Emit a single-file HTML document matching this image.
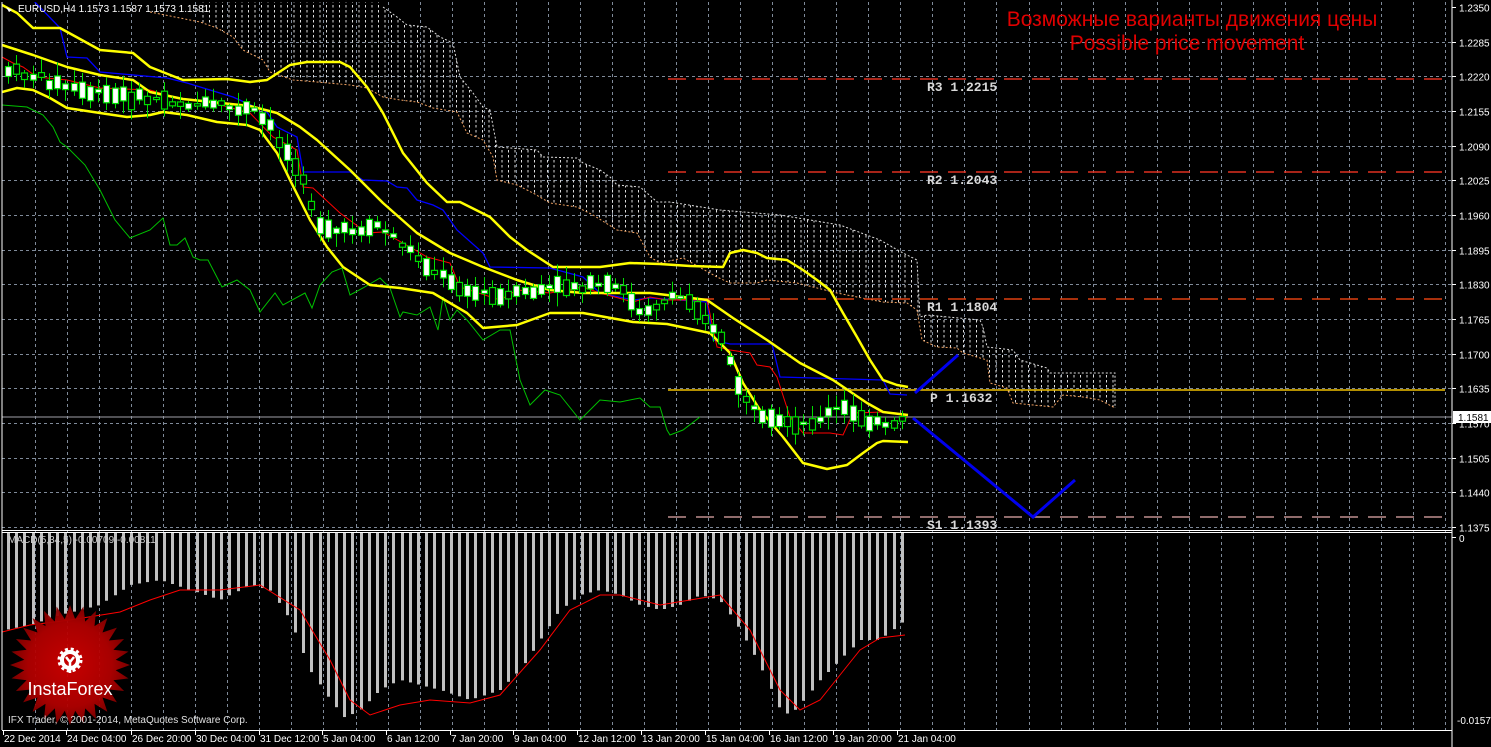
<!DOCTYPE html>
<html><head><meta charset="utf-8"><style>
html,body{margin:0;padding:0;background:#000;width:1491px;height:747px;overflow:hidden}
svg{display:block}
</style></head><body>
<svg id="s" width="1491" height="747" viewBox="0 0 1491 747" xmlns="http://www.w3.org/2000/svg" font-family="Liberation Sans, sans-serif">
<defs>
<pattern id="hatch" width="6.5" height="5" patternUnits="userSpaceOnUse">
<line x1="1.5" y1="0" x2="1.5" y2="2.5" stroke="#ddd" stroke-width="1"/>
</pattern>
<clipPath id="mainclip"><rect x="2" y="2" width="1450" height="528"/></clipPath>
<clipPath id="subclip"><rect x="2" y="533" width="1450" height="197"/></clipPath>
<radialGradient id="lg"><stop offset="0" stop-color="#d00000"/><stop offset="0.7" stop-color="#b00000"/><stop offset="1" stop-color="#800000"/></radialGradient>
</defs>
<g id="grid" stroke="#7f8a99" stroke-dasharray="3,3" stroke-width="1"></g>
<g clip-path="url(#mainclip)">
<polygon fill="url(#hatch)" points="200,0 383,0 383,7 397,17 407,25 427,27 440,37 453,43 460,77 473,93 483,107 490,110 497,147 537,150 543,157 577,158 583,163 600,170 610,177 617,185 640,187 647,193 657,202 670,202 720,210 780,215 840,225 880,240 903,253 917,260 920,317 927,315 980,320 983,327 987,347 1013,350 1020,360 1047,368 1050,373 1115,373 1115,408 1100,400 1083,397 1063,395 1053,407 1013,403 1007,388 990,383 987,360 963,353 957,348 937,347 922,340 917,310 907,303 883,302 857,297 837,293 797,283 767,280 757,283 730,283 717,277 683,258 660,263 650,257 637,233 617,230 593,215 577,207 550,203 533,193 517,185 497,180 493,157 483,140 467,133 457,112 433,108 417,102 400,100 383,97 367,88 350,85 317,82 293,80 270,72 263,60 243,50 233,37 217,28 200,22"/>
<polyline fill="none" stroke="#f0a060" stroke-dasharray="2,2" points="150,12 200,22 217,28 233,37 243,50 263,60 270,72 293,80 317,82 350,85 367,88 383,97 400,100 417,102 433,108 457,112 467,133 483,140 493,157 497,180 517,185 533,193 550,203 577,207 593,215 617,230 637,233 650,257 660,263 683,258 717,277 730,283 757,283 767,280 797,283 837,293 857,297 883,302 907,303 917,310 922,340 937,347 957,348 963,353 987,360 990,383 1007,388 1013,403 1053,407 1063,395 1083,397 1100,400 1115,408"/>
<polyline fill="none" stroke="#ddd" stroke-dasharray="2,2" points="383,7 397,17 407,25 427,27 440,37 453,43 460,77 473,93 483,107 490,110 497,147 537,150 543,157 577,158 583,163 600,170 610,177 617,185 640,187 647,193 657,202 670,202 720,210 780,215 840,225 880,240 903,253 917,260 920,317 927,315 980,320 983,327 987,347 1013,350 1020,360 1047,368 1050,373 1115,373 1115,408"/>
<line x1="668" y1="79" x2="1445" y2="79" stroke="#e03020" stroke-width="1.5" stroke-dasharray="18,10"/>
<line x1="668" y1="172" x2="1445" y2="172" stroke="#e03020" stroke-width="1.5" stroke-dasharray="18,10"/>
<line x1="668" y1="299" x2="1445" y2="299" stroke="#e04010" stroke-width="1.5" stroke-dasharray="18,10"/>
<line x1="668" y1="390" x2="1445" y2="390" stroke="#f0c000" stroke-width="1.5"/>
<line x1="668" y1="517" x2="1445" y2="517" stroke="#c09090" stroke-width="1.5" stroke-dasharray="18,10"/>
<line x1="2" y1="417" x2="1452" y2="417" stroke="#a0a0a8" stroke-width="1"/>
<polyline fill="none" stroke="#00c000" stroke-width="1" points="2,105 27,107 43,115 53,127 60,142 67,147 85,165 100,190 115,220 130,238 150,230 163,218 170,245 177,245 185,238 193,257 200,260 208,260 222,287 237,280 250,290 260,312 275,293 283,305 305,293 312,308 320,285 332,272 342,268 350,295 363,288 380,278 390,288 400,317 403,312 417,315 430,307 438,330 443,297 450,320 457,310 467,320 483,340 500,330 510,330 520,380 530,405 545,390 560,395 580,420 600,400 620,402 640,398 650,407 660,407 667,430 670,435 683,430 700,417"/>
<polyline fill="none" stroke="#0000ff" stroke-width="1.3" points="33,0 60,28 67,57 87,58 100,72 167,78 187,83 233,97 253,106 267,112 277,127 297,137 303,172 350,172 363,180 387,181 397,187 407,188 417,200 433,205 443,210 457,230 483,253 490,267 550,268 583,277 600,293 633,300 650,298 707,302 713,340 730,344 772,344 780,377 883,380 890,394 907,395"/>
<polyline fill="none" stroke="#ff0000" stroke-width="1" points="2,57 13,63 23,67 37,77 67,80 100,88 150,90 177,98 217,104 250,113 273,137 297,150 303,187 313,188 340,213 367,233 383,232 410,247 427,257 450,263 460,287 500,300 517,290 550,293 583,287 600,293 633,302 650,297 667,300 707,300 717,347 730,350 750,353 757,365 770,367 777,377 790,417 803,433 830,433 843,435 853,413 883,412 897,413 907,418"/>
<g fill="none" stroke="#ffff00" stroke-width="2.5" stroke-linejoin="round">
<polyline points="2,5 17,13 33,28 60,28 100,50 133,53 150,67 183,80 227,79 250,82 267,80 290,65 307,62 340,62 350,67 367,87 383,113 403,153 427,183 447,202 460,202 490,217 510,237 527,250 553,267 600,267 630,263 660,264 690,266 723,267 730,253 743,250 757,253 767,258 787,260 803,270 817,280 830,290 843,313 857,337 870,360 883,380 897,385 908,387"/>
<polyline points="2,45 33,55 67,67 100,75 133,80 150,92 183,99 250,106 277,113 300,127 317,140 350,170 383,203 417,233 450,253 483,267 517,280 550,290 583,293 650,293 667,295 707,300 733,318 767,340 800,363 833,380 867,403 883,412 908,415"/>
<polyline points="2,92 17,88 33,90 50,98 67,108 100,113 127,117 150,115 163,112 187,115 217,122 247,125 260,130 277,153 290,180 310,220 327,247 343,267 370,285 400,288 433,293 467,313 483,328 517,325 550,313 583,313 633,322 650,323 667,324 710,333 730,353 743,383 760,410 783,437 803,463 827,469 847,465 863,453 877,443 883,441 908,442"/>
</g>
<g id="candles"></g>
<g fill="none" stroke="#0000ee" stroke-width="3">
<polyline points="915,393 958,355"/>
<polyline points="913,418 1033,517 1075,480"/>
</g>
<g style="font-family:'Liberation Mono',monospace;font-weight:bold" font-size="13" fill="#d8d8d8">
<text x="927" y="91">R3 1.2215</text>
<text x="927" y="184">R2 1.2043</text>
<text x="927" y="311">R1 1.1804</text>
<text x="930" y="402">P 1.1632</text>
<text x="927" y="529">S1 1.1393</text>
</g>
</g>
<text x="1192" y="26" font-size="21" fill="#e00000" text-anchor="middle">Возможные варианты движения цены</text>
<text x="1187" y="50" font-size="21" fill="#e00000" text-anchor="middle">Possible price movement</text>
<g clip-path="url(#subclip)">
<g id="macd" fill="#c0c0c0"></g>
<polyline fill="none" stroke="#ff0000" stroke-width="1" points="2,632 30,625 70,620 120,612 150,600 180,590 220,590 260,585 300,610 330,660 350,700 370,715 400,705 430,700 470,703 500,695 540,650 570,610 600,595 620,595 660,605 690,600 720,595 750,630 780,690 800,710 820,700 840,675 860,650 880,638 905,635"/>
</g>
<g transform="translate(70,665)">
<polygon id="star" fill="url(#lg)" opacity="0.95"/>
<g fill="none" stroke="#fff">
<circle cx="0" cy="-5" r="8" stroke-width="4"/>
<circle cx="0" cy="-5" r="11" stroke-width="3" stroke-dasharray="3,2.8"/>
</g>
<path d="M-4,-8 L0,-3 L4,-8 M0,-3 L0,8" stroke="#fff" stroke-width="2.5" fill="none"/>
<text x="0" y="30" font-size="18" fill="#fff" text-anchor="middle">InstaForex</text>
</g>
<text x="8" y="723" font-size="10" fill="#e0e0e0">IFX Trader, © 2001-2014, MetaQuotes Software Corp.</text>
<text x="18" y="12" font-size="10" fill="#fff">EURUSD,H4  1.1573 1.1587 1.1573 1.1581</text>
<polygon points="6,7 12,10 9,12" fill="#fff"/>
<text x="8" y="543" font-size="10" fill="#d0d0d0">MACD(5,34,5) -0.00709 -0.00811</text>
<line x1="2" y1="2" x2="2" y2="730" stroke="#fff"/>
<line x1="1452" y1="0" x2="1452" y2="747" stroke="#fff"/>
<line x1="2" y1="530.5" x2="1452" y2="530.5" stroke="#fff"/>
<line x1="2" y1="532.5" x2="1452" y2="532.5" stroke="#fff"/>
<line x1="2" y1="730.5" x2="1452" y2="730.5" stroke="#fff"/>
<g id="axis" font-size="10" fill="#fff"></g>
<rect x="1453" y="411" width="38" height="12" fill="#fff"/>
<text x="1458" y="421" font-size="10" fill="#000">1.1581</text>
</svg>
<script>
(function(){
var NS="http://www.w3.org/2000/svg";
function el(t,a,p){var e=document.createElementNS(NS,t);for(var k in a)e.setAttribute(k,a[k]);p.appendChild(e);return e;}
var grid=document.getElementById('grid'),axis=document.getElementById('axis');
var prices=["1.2350","1.2285","1.2220","1.2155","1.2090","1.2025","1.1960","1.1895","1.1830","1.1765","1.1700","1.1635","1.1570","1.1505","1.1440","1.1375"];
for(var i=0;i<prices.length;i++){var y=Math.round(7+i*34.67)+0.5;
 if(i>0)el('line',{x1:2,y1:y,x2:1452,y2:y},grid);
 el('line',{x1:1452,y1:y,x2:1456,y2:y,stroke:'#fff'},axis);
 var t=el('text',{x:1459,y:y+4},axis);t.textContent=prices[i];}
for(var x=35;x<1452;x+=32.05){var xx=Math.round(x)+0.5;el('line',{x1:xx,y1:2,x2:xx,y2:730},grid);}
var t0=el('text',{x:1459,y:542},axis);t0.textContent="0";
var t1=el('text',{x:1457,y:724},axis);t1.textContent="-0.0157";
el('line',{x1:1452,y1:537.5,x2:1456,y2:537.5,stroke:'#fff'},axis);
var times=[["22 Dec 2014",3],["24 Dec 04:00",66],["26 Dec 20:00",131],["30 Dec 04:00",195],["31 Dec 12:00",259],["5 Jan 04:00",322],["6 Jan 12:00",386],["7 Jan 20:00",450],["9 Jan 04:00",513],["12 Jan 12:00",577],["13 Jan 20:00",641],["15 Jan 04:00",705],["16 Jan 12:00",769],["19 Jan 20:00",833],["21 Jan 04:00",897]];
times.forEach(function(a){var t=el('text',{x:a[1]+1,y:742},axis);t.textContent=a[0];el('line',{x1:a[1]+0.5,y1:730,x2:a[1]+0.5,y2:735,stroke:'#fff'},axis);});
function interp(pts,x){for(var i=1;i<pts.length;i++){if(x<=pts[i][0]){var a=pts[i-1],b=pts[i];return a[1]+(b[1]-a[1])*(x-a[0])/(b[0]-a[0]);}}return pts[pts.length-1][1];}
var cp=[[2,70],[30,75],[60,85],[100,95],[160,100],[200,105],[250,110],[270,125],[300,175],[320,225],[340,232],[380,225],[400,242],[430,268],[470,292],[500,298],[540,290],[570,285],[620,288],[640,310],[680,297],[700,310],[720,335],[735,380],[760,420],[800,428],[840,408],[870,420],[890,430],[905,420]];
var seed=7;function rnd(){seed=(seed*9301+49297)%233280;return seed/233280;}
var cg=document.getElementById('candles');
for(var x=8;x<=905;x+=8.2){var c=interp(cp,x),bh=2+rnd()*16,tp=c-bh/2+(rnd()-0.5)*8,bear=rnd()<0.55;
 var wt=tp-2-rnd()*12,wb=tp+bh+2+rnd()*12;var cx=Math.round(x)+0.5;
 el('line',{x1:cx,y1:wt,x2:cx,y2:wb,stroke:'#00dd00','stroke-width':1},cg);
 el('rect',{x:cx-3,y:tp,width:6,height:Math.max(bh,1.5),fill:bear?'#fff':'#000',stroke:'#00dd00','stroke-width':1.2},cg);}
var mp=[[5,630],[30,625],[60,615],[100,605],[130,585],[160,580],[190,590],[220,600],[250,585],[270,590],[290,620],[310,670],[330,700],[345,718],[360,710],[380,690],[400,680],[440,690],[470,700],[500,690],[520,670],[540,640],[560,610],[580,595],[600,590],[620,595],[640,605],[660,610],[680,605],[700,595],[720,600],[740,630],[760,665],[780,710],[790,715],[800,705],[820,680],[840,660],[860,640],[880,640],[905,620]];
var mg=document.getElementById('macd');
for(var x=8;x<=908;x+=8.2){var y=interp(mp,x);el('rect',{x:Math.round(x)-1,y:533,width:3,height:y-533},mg);}
var pts=[];for(var i=0;i<56;i++){var r=(i%2)?46:60,a=i*Math.PI/28;pts.push((r*Math.cos(a)).toFixed(1)+","+(r*Math.sin(a)).toFixed(1));}
document.getElementById('star').setAttribute('points',pts.join(' '));
})();
</script>
</body></html>
